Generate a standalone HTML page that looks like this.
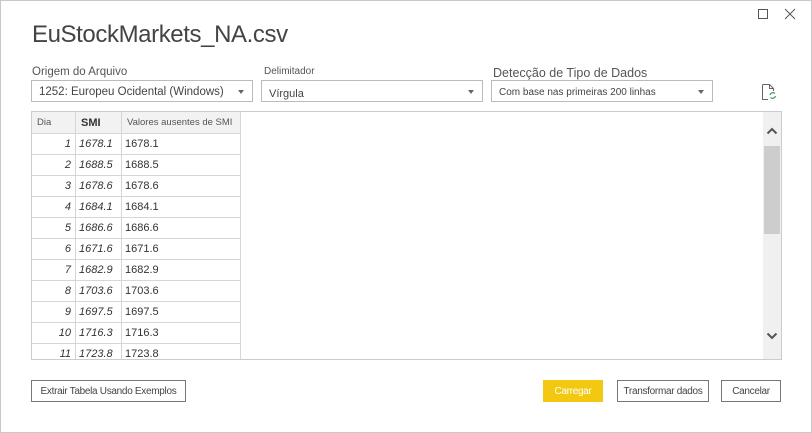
<!DOCTYPE html>
<html><head><style>
*{margin:0;padding:0;box-sizing:border-box}
body{width:812px;height:433px;background:#fff;font-family:"Liberation Sans",sans-serif;position:relative;overflow:hidden;color:#333}
.win{position:absolute;left:0;top:0;width:812px;height:433px;border:1px solid #c8c8c8}
.a{position:absolute}
.title{left:32px;top:21px;font-size:24px;color:#444;letter-spacing:-0.4px}
.lbl{font-size:11.5px;color:#555}
.dd{border:1px solid #bbb;height:22px;font-size:11px;color:#444;padding:5px 0 0 7px}
.dd:after{content:"";position:absolute;right:8px;top:9px;border-left:3.5px solid transparent;border-right:3.5px solid transparent;border-top:4px solid #666}
.grid{left:31px;top:111px;width:751px;height:249px;border:1px solid #ccc;overflow:hidden}
table{border-collapse:collapse;font-size:11px;position:absolute;left:-1px;top:-1px;table-layout:fixed}
td{border:1px solid #d6d6d6;height:21px;padding:0 3px;white-space:nowrap;overflow:hidden}
th{border:1px solid #d6d6d6;height:22px;background:#f2f2f2;font-weight:normal;text-align:left;padding:0 5px;font-size:9.5px;color:#555;white-space:nowrap;overflow:hidden}
.n{text-align:right;font-style:italic;padding-right:4px}
.s{font-style:italic}
.btn{border:1px solid #777;height:23px;font-size:10px;color:#444;text-align:center;line-height:21px;letter-spacing:-0.3px}
</style></head><body>
<div class="win"></div>
<div class="a" style="left:758px;top:9px;width:10px;height:10px;border:1px solid #555"></div>
<svg class="a" style="left:784px;top:8px" width="12" height="12"><path d="M1 1L11 11M11 1L1 11" stroke="#555" stroke-width="1"/></svg>
<div class="a title">EuStockMarkets_NA.csv</div>
<div class="a lbl" style="left:32px;top:66px">Origem do Arquivo</div>
<div class="a lbl" style="left:264px;top:66px;font-size:10px">Delimitador</div>
<div class="a lbl" style="left:493px;top:66px;font-size:12.5px">Detecção de Tipo de Dados</div>
<div class="a dd" style="left:31px;top:80px;width:222px;font-size:11.5px">1252: Europeu Ocidental (Windows)</div>
<div class="a dd" style="left:261px;top:80px;width:222px;padding-top:7px">Vírgula</div>
<div class="a dd" style="left:491px;top:80px;width:222px;font-size:10px;padding-top:6px">Com base nas primeiras 200 linhas</div>
<svg class="a" style="left:761px;top:83px" width="16" height="18"><path d="M1.5 1.5H8.5L12.5 5.5V8M12.5 5.5H8.5V1.5M1.5 1.5V16.5H7" fill="none" stroke="#666"/><path d="M9 12a3 3 0 0 1 5-1.5M14.5 13a3 3 0 0 1-5 1.5" fill="none" stroke="#3a9a5a" stroke-width="1.2"/></svg>
<div class="a grid">
<table style="width:209px">
<colgroup><col style="width:44px"><col style="width:46px"><col style="width:119px"></colgroup>
<tr><th>Dia</th><th style="font-weight:bold;font-size:11px;color:#333">SMI</th><th>Valores ausentes de SMI</th></tr>
<tr><td class="n">1</td><td class="s">1678.1</td><td>1678.1</td></tr>
<tr><td class="n">2</td><td class="s">1688.5</td><td>1688.5</td></tr>
<tr><td class="n">3</td><td class="s">1678.6</td><td>1678.6</td></tr>
<tr><td class="n">4</td><td class="s">1684.1</td><td>1684.1</td></tr>
<tr><td class="n">5</td><td class="s">1686.6</td><td>1686.6</td></tr>
<tr><td class="n">6</td><td class="s">1671.6</td><td>1671.6</td></tr>
<tr><td class="n">7</td><td class="s">1682.9</td><td>1682.9</td></tr>
<tr><td class="n">8</td><td class="s">1703.6</td><td>1703.6</td></tr>
<tr><td class="n">9</td><td class="s">1697.5</td><td>1697.5</td></tr>
<tr><td class="n">10</td><td class="s">1716.3</td><td>1716.3</td></tr>
<tr><td class="n">11</td><td class="s">1723.8</td><td>1723.8</td></tr>
</table>
<div class="a" style="left:731px;top:0;width:18px;height:247px;background:#f0f0f0"></div>
<div class="a" style="left:732px;top:34px;width:16px;height:88px;background:#cdcdcd"></div>
<svg class="a" style="left:734px;top:15px" width="12" height="8"><path d="M1.5 6.5L6 2L10.5 6.5" fill="none" stroke="#555" stroke-width="2"/></svg>
<svg class="a" style="left:734px;top:220px" width="12" height="8"><path d="M1.5 1.5L6 6L10.5 1.5" fill="none" stroke="#555" stroke-width="2"/></svg>
</div>
<div class="a btn" style="left:31px;top:380px;width:155px;height:22px">Extrair Tabela Usando Exemplos</div>
<div class="a btn" style="left:543px;top:380px;width:60px;height:22px;background:#f2c811;border-color:#f2c811;color:#fff">Carregar</div>
<div class="a btn" style="left:617px;top:380px;width:92px;height:22px">Transformar dados</div>
<div class="a btn" style="left:721px;top:380px;width:60px;height:22px">Cancelar</div>
</body></html>
